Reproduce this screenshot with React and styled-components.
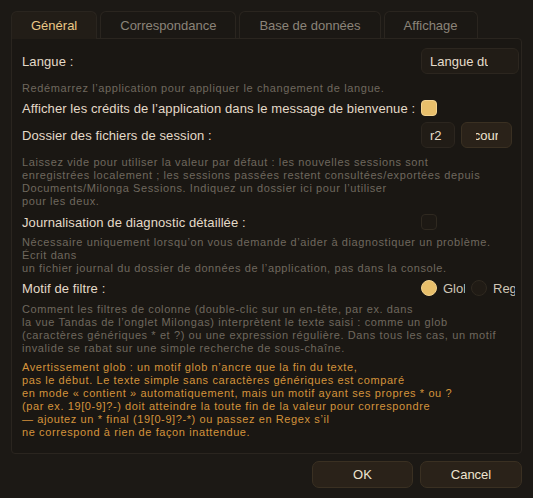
import React, { useState } from 'react'
import styled, { createGlobalStyle } from 'styled-components'

const GlobalStyle = createGlobalStyle`
  html, body {
    margin: 0;
    background: #1c1915;
  }
  body {
    font-family: "Liberation Sans", Arial, sans-serif;
    color: #e4dac8;
  }
`

const Window = styled.div`
  height: 498px;
  box-sizing: border-box;
  padding: 11px 11px 0;
  display: flex;
  flex-direction: column;
`

const TabBar = styled.div`
  display: flex;
  gap: 3px;
  height: 27px;
`

const Tab = styled.div`
  display: flex;
  align-items: center;
  padding: 0 19px;
  font-size: 13px;
  border: 1px solid #2a251f;
  border-bottom: none;
  border-radius: 6px 6px 0 0;
  background: ${p => (p.$active ? '#221d17' : '#1b1814')};
  color: ${p => (p.$active ? '#ebc887' : '#8b8479')};
  position: relative;
  z-index: ${p => (p.$active ? 1 : 0)};
  height: ${p => (p.$active ? '28px' : '27px')};
  box-sizing: border-box;
`

const Panel = styled.div`
  border: 1px solid #2a251f;
  border-radius: 0 4px 4px 4px;
  background: #1a1713;
  padding: 9px 2px 14px 10px;
  display: flex;
  flex-direction: column;
`

const Row = styled.div`
  display: grid;
  grid-template-columns: 1fr 98px;
  align-items: center;
  height: ${p => p.$h}px;
  margin-top: ${p => p.$mt || 0}px;
`

const Label = styled.div`
  font-size: 13px;
  letter-spacing: 0.1px;
  color: #e4dac8;
  white-space: nowrap;
`

const Controls = styled.div`
  display: flex;
  align-items: center;
  gap: 6px;
  overflow: hidden;
`

const Help = styled.div`
  font-size: 11px;
  letter-spacing: 0.6px;
  line-height: 13px;
  white-space: nowrap;
  margin-top: ${p => p.$mt || 0}px;
  color: ${p => (p.$warn ? '#d4933b' : '#6f685e')};
`

const Field = styled.div`
  width: ${p => p.$w}px;
  height: 26px;
  box-sizing: border-box;
  flex-shrink: 0;
  border: 1px solid #2c261f;
  border-radius: 6px;
  background: #211c16;
  color: #e6dccb;
  font-size: 13px;
  display: flex;
  align-items: center;
  padding: 0 ${p => p.$pr || 8}px 0 8px;
  white-space: nowrap;
  overflow: hidden;
`

const FieldText = styled.span`
  overflow: hidden;
`

const SmallButton = styled.button`
  width: 51px;
  height: 26px;
  flex-shrink: 0;
  border: 1px solid #3a3022;
  border-radius: 6px;
  background: #2a2219;
  color: #eee4cf;
  font: 13px "Liberation Sans", Arial, sans-serif;
  padding: 0;
  display: flex;
  justify-content: center;
  align-items: center;
`

const ClipText = styled.span`
  width: 22px;
  overflow: hidden;
  display: flex;
  justify-content: center;
  white-space: nowrap;
`

const Check = styled.div`
  width: 16px;
  height: 16px;
  box-sizing: border-box;
  border-radius: 4px;
  border: 1px solid ${p => (p.$on ? '#f2d28f' : '#2f2920')};
  background: ${p => (p.$on ? '#e8bf6b' : '#1d1914')};
`

const RadioItem = styled.div`
  display: flex;
  align-items: center;
  gap: 6px;
  flex-shrink: 0;
`

const RadioDot = styled.div`
  width: 16px;
  height: 16px;
  box-sizing: border-box;
  border-radius: 50%;
  border: 1px solid ${p => (p.$on ? '#f2d28f' : '#2f2920')};
  background: ${p => (p.$on ? '#e8bf6b' : '#201b15')};
`

const RadioLabel = styled.span`
  width: 22px;
  overflow: hidden;
  white-space: nowrap;
  font-size: 13px;
  color: #cfc6b7;
`

const Footer = styled.div`
  display: flex;
  justify-content: flex-end;
  gap: 7px;
  margin-top: 7px;
`

const DialogButton = styled.button`
  width: ${p => p.$w}px;
  height: 27px;
  border: 1px solid #3a3022;
  border-radius: 7px;
  background: #2a2219;
  color: #efe5d0;
  font: 13px "Liberation Sans", Arial, sans-serif;
`

const Lines = ({ lines }) =>
  lines.map((l, i) => <div key={i}>{l}</div>)

export default function App() {
  const [tab] = useState(0)
  const tabs = ['Général', 'Correspondance', 'Base de données', 'Affichage']

  return (
    <>
      <GlobalStyle />
      <Window>
        <TabBar>
          {tabs.map((t, i) => (
            <Tab key={t} $active={i === tab}>{t}</Tab>
          ))}
        </TabBar>
        <Panel>
          <Row $h={26}>
            <Label>Langue :</Label>
            <Controls>
              <Field $w={98} $pr={30}><FieldText>Langue du système</FieldText></Field>
            </Controls>
          </Row>
          <Help $mt={8}>Redémarrez l’application pour appliquer le changement de langue.</Help>

          <Row $h={20} $mt={3}>
            <Label>Afficher les crédits de l’application dans le message de bienvenue :</Label>
            <Controls><Check $on /></Controls>
          </Row>

          <Row $h={26} $mt={4}>
            <Label>Dossier des fichiers de session :</Label>
            <Controls>
              <Field $w={34}>r2</Field>
              <SmallButton><ClipText>Parcourir…</ClipText></SmallButton>
            </Controls>
          </Row>
          <Help $mt={8}>
            <Lines lines={[
              'Laissez vide pour utiliser la valeur par défaut : les nouvelles sessions sont',
              'enregistrées localement ; les sessions passées restent consultées/exportées depuis',
              'Documents/Milonga Sessions. Indiquez un dossier ici pour l’utiliser',
              'pour les deux.',
            ]} />
          </Help>

          <Row $h={20} $mt={4}>
            <Label>Journalisation de diagnostic détaillée :</Label>
            <Controls><Check /></Controls>
          </Row>
          <Help $mt={4}>
            <Lines lines={[
              'Nécessaire uniquement lorsqu’on vous demande d’aider à diagnostiquer un problème.',
              'Écrit dans',
              'un fichier journal du dossier de données de l’application, pas dans la console.',
            ]} />
          </Help>

          <Row $h={20} $mt={3}>
            <Label>Motif de filtre :</Label>
            <Controls>
              <RadioItem><RadioDot $on /><RadioLabel>Glob</RadioLabel></RadioItem>
              <RadioItem><RadioDot /><RadioLabel>Regex</RadioLabel></RadioItem>
            </Controls>
          </Row>
          <Help $mt={5}>
            <Lines lines={[
              'Comment les filtres de colonne (double-clic sur un en-tête, par ex. dans',
              'la vue Tandas de l’onglet Milongas) interprètent le texte saisi : comme un glob',
              '(caractères génériques * et ?) ou une expression régulière. Dans tous les cas, un motif',
              'invalide se rabat sur une simple recherche de sous-chaîne.',
            ]} />
          </Help>
          <Help $mt={6} $warn>
            <Lines lines={[
              'Avertissement glob : un motif glob n’ancre que la fin du texte,',
              'pas le début. Le texte simple sans caractères génériques est comparé',
              'en mode « contient » automatiquement, mais un motif ayant ses propres * ou ?',
              '(par ex. 19[0-9]?-) doit atteindre la toute fin de la valeur pour correspondre',
              '— ajoutez un * final (19[0-9]?-*) ou passez en Regex s’il',
              'ne correspond à rien de façon inattendue.',
            ]} />
          </Help>
        </Panel>
        <Footer>
          <DialogButton $w={101}>OK</DialogButton>
          <DialogButton $w={102}>Cancel</DialogButton>
        </Footer>
      </Window>
    </>
  )
}
